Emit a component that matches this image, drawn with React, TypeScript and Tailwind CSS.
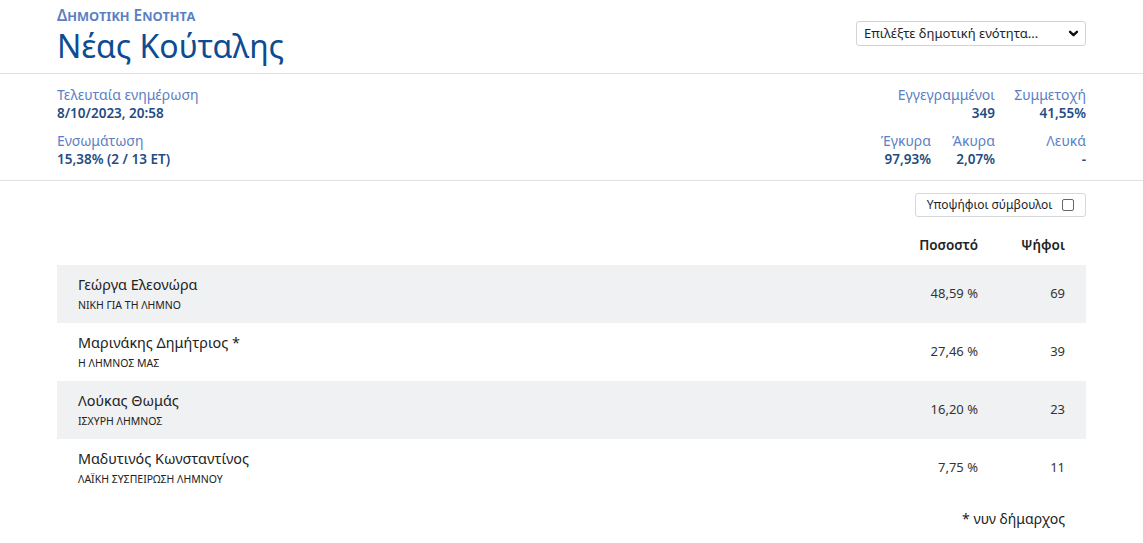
import React, { useState } from 'react';

const candidates = [
  { name: 'Γεώργα Ελεονώρα', party: 'ΝΙΚΗ ΓΙΑ ΤΗ ΛΗΜΝΟ', pct: '48,59 %', votes: '69' },
  { name: 'Μαρινάκης Δημήτριος *', party: 'Η ΛΗΜΝΟΣ ΜΑΣ', pct: '27,46 %', votes: '39' },
  { name: 'Λούκας Θωμάς', party: 'ΙΣΧΥΡΗ ΛΗΜΝΟΣ', pct: '16,20 %', votes: '23' },
  { name: 'Μαδυτινός Κωνσταντίνος', party: 'ΛΑΪΚΗ ΣΥΣΠΕΙΡΩΣΗ ΛΗΜΝΟΥ', pct: '7,75 %', votes: '11' },
];

export default function App() {
  const [councillors, setCouncillors] = useState(false);

  return (
    <div className="min-h-screen bg-white text-[#333] text-[13px]" style={{ fontFamily: '"Noto Sans", "Open Sans", sans-serif' }}>
      {/* Header */}
      <div className="border-b border-[#dee2e6]">
        <div className="mx-[57px] flex items-start justify-between pt-[5px] pb-[6px]">
          <div>
            <div className="text-[15.5px] font-semibold text-[#5c7fc4] [font-variant:small-caps] leading-[20px]">Δημοτική Ενότητα</div>
            <h1 className="text-[32px] leading-[42px] text-[#0d4c92]">Νέας Κούταλης</h1>
          </div>
          <div className="mt-[16px] w-[230px] h-[25px] border border-[#ced4da] rounded-[3px] flex items-center justify-between pl-[7px] pr-[6px] text-[13px] text-[#212529]">
            <span>Επιλέξτε δημοτική ενότητα...</span>
            <svg width="11" height="11" viewBox="0 0 16 16" fill="none" stroke="#111" strokeWidth="3.5" strokeLinecap="round" strokeLinejoin="round">
              <path d="M3 5.5l5 5 5-5" />
            </svg>
          </div>
        </div>
      </div>

      {/* Stats */}
      <div className="border-b border-[#dee2e6]">
        <div className="mx-[57px] flex justify-between pt-[11px] pb-[11px] leading-[19px]">
          <div className="flex flex-col gap-[8px]">
            <div>
              <div className="text-[14px] text-[#5c7fc4]">Τελευταία ενημέρωση</div>
              <div className="text-[13.5px] font-semibold text-[#1f4c82]">8/10/2023, 20:58</div>
            </div>
            <div>
              <div className="text-[14px] text-[#5c7fc4]">Ενσωμάτωση</div>
              <div className="text-[13.5px] font-semibold text-[#1f4c82]">15,38% (2 / 13 ΕΤ)</div>
            </div>
          </div>
          <div className="flex flex-col gap-[8px] text-right">
            <div className="flex justify-end">
              <div className="w-[120px]">
                <div className="text-[14px] text-[#5c7fc4]">Εγγεγραμμένοι</div>
                <div className="text-[13.5px] font-semibold text-[#1f4c82]">349</div>
              </div>
              <div className="w-[91px]">
                <div className="text-[14px] text-[#5c7fc4]">Συμμετοχή</div>
                <div className="text-[13.5px] font-semibold text-[#1f4c82]">41,55%</div>
              </div>
            </div>
            <div className="flex justify-end">
              <div className="w-[70px]">
                <div className="text-[14px] text-[#5c7fc4]">Έγκυρα</div>
                <div className="text-[13.5px] font-semibold text-[#1f4c82]">97,93%</div>
              </div>
              <div className="w-[64px]">
                <div className="text-[14px] text-[#5c7fc4]">Άκυρα</div>
                <div className="text-[13.5px] font-semibold text-[#1f4c82]">2,07%</div>
              </div>
              <div className="w-[91px]">
                <div className="text-[14px] text-[#5c7fc4]">Λευκά</div>
                <div className="text-[13.5px] font-semibold text-[#1f4c82]">-</div>
              </div>
            </div>
          </div>
        </div>
      </div>

      {/* Results */}
      <div className="mx-[57px] pt-[12px]">
        <div className="flex justify-end">
          <button
            onClick={() => setCouncillors(!councillors)}
            className="h-[24px] w-[171px] border border-[#d5d8dc] rounded-[3px] flex items-center justify-center gap-[10px] text-[12px] text-[#212529]"
          >
            <span>Υποψήφιοι σύμβουλοι</span>
            <span className={`w-[12px] h-[12px] border border-[#666] rounded-[2px] ${councillors ? 'bg-[#0d6efd]' : 'bg-white'}`} />
          </button>
        </div>

        <div className="flex items-center h-[36px] mt-[10px] font-semibold text-[13.5px] text-[#222]">
          <div className="flex-1" />
          <div className="w-[100px] text-right">Ποσοστό</div>
          <div className="w-[87px] text-right">Ψήφοι</div>
          <div className="w-[21px]" />
        </div>

        <div className="mt-[2px]">
          {candidates.map((c, i) => (
            <div key={c.name} className={`flex items-center h-[58px] ${i % 2 === 0 ? 'bg-[#f0f1f3]' : 'bg-white'}`}>
              <div className="flex-1 pl-[21px]">
                <div className="text-[14.4px] leading-[20px] text-[#222]">{c.name}</div>
                <div className="text-[10.5px] leading-[16px] text-[#222] mt-[2px]">{c.party}</div>
              </div>
              <div className="w-[100px] text-right text-[13px]">{c.pct}</div>
              <div className="w-[87px] text-right text-[13px]">{c.votes}</div>
              <div className="w-[21px]" />
            </div>
          ))}
        </div>

        <div className="flex justify-end pr-[21px] mt-[11px] text-[14px] text-[#222]">* νυν δήμαρχος</div>
      </div>
    </div>
  );
}
